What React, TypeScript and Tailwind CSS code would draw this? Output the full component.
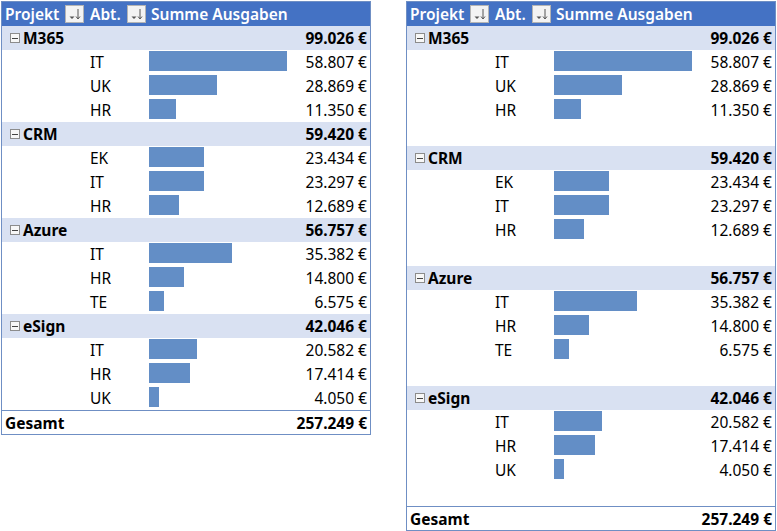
import React from "react";

type Item = { dept: string; value: number };
type Group = { name: string; total: string; items: Item[] };

const groups: Group[] = [
  { name: "M365", total: "99.026 €", items: [{ dept: "IT", value: 58807 }, { dept: "UK", value: 28869 }, { dept: "HR", value: 11350 }] },
  { name: "CRM", total: "59.420 €", items: [{ dept: "EK", value: 23434 }, { dept: "IT", value: 23297 }, { dept: "HR", value: 12689 }] },
  { name: "Azure", total: "56.757 €", items: [{ dept: "IT", value: 35382 }, { dept: "HR", value: 14800 }, { dept: "TE", value: 6575 }] },
  { name: "eSign", total: "42.046 €", items: [{ dept: "IT", value: 20582 }, { dept: "HR", value: 17414 }, { dept: "UK", value: 4050 }] },
];

const MAX = 58807;
const fmt = (v: number) => v.toLocaleString("de-DE") + " €";

function FilterButton() {
  return (
    <div className="w-[19px] h-[18px] bg-[#f3f3f3] border border-[#b4b4b4] flex items-center justify-center">
      <svg width="17" height="16" viewBox="0 0 17 16">
        <path d="M3.5 10.5 L8.5 10.5 L6 13 Z" fill="#555" />
        <path d="M12 3 L12 12.5" stroke="#555" strokeWidth="1" />
        <path d="M10 10.5 L12 13 L14 10.5" stroke="#555" strokeWidth="1" fill="none" />
      </svg>
    </div>
  );
}

function MinusBox() {
  return (
    <div className="w-[10px] h-[10px] border border-[#8c8c8c] bg-[#f7f7f7] flex items-center justify-center mr-[3px]">
      <div className="w-[6px] h-px bg-[#444]" />
    </div>
  );
}

function Pivot({ spaced }: { spaced: boolean }) {
  return (
    <div className="w-[370px] border border-[#6f8fc4] flex flex-col bg-white">
      <div className="h-6 bg-[#4472C4] grid grid-cols-[86px_60px_1fr] text-white font-semibold">
        <div className="flex items-center pl-[3px]">
          <span>Projekt</span>
          <div className="ml-auto mr-[4px]"><FilterButton /></div>
        </div>
        <div className="flex items-center pl-[2px]">
          <span>Abt.</span>
          <div className="ml-auto mr-[2px]"><FilterButton /></div>
        </div>
        <div className="flex items-center pl-[3px]">Summe Ausgaben</div>
      </div>
      {groups.map((g, gi) => (
        <React.Fragment key={g.name}>
          {spaced && gi > 0 && <div className="h-6" />}
          <div className="h-6 bg-[#D9E1F2] flex items-center font-bold">
            <div className="flex items-center pl-[8px]">
              <MinusBox />
              <span>{g.name}</span>
            </div>
            <div className="ml-auto pr-[3px]">{g.total}</div>
          </div>
          {g.items.map((it, i) => (
            <div key={i} className="h-6 grid grid-cols-[86px_60px_1fr]">
              <div />
              <div className="flex items-center pl-[2px]">{it.dept}</div>
              <div className="flex items-center">
                <div
                  className="self-start mt-px ml-px h-5 bg-[#638EC6]"
                  style={{ width: Math.round((it.value / MAX) * 138) }}
                />
                <div className="ml-auto pr-[3px]">{fmt(it.value)}</div>
              </div>
            </div>
          ))}
        </React.Fragment>
      ))}
      {spaced && <div className="h-6" />}
      <div className="h-6 border-t border-[#6f8fc4] flex items-center font-bold">
        <div className="pl-[3px]">Gesamt</div>
        <div className="ml-auto pr-[3px]">257.249 €</div>
      </div>
    </div>
  );
}

export default function App() {
  return (
    <div className="w-[777px] h-[531px] bg-white flex items-start gap-[35px] pl-px pt-px text-[15.5px] leading-6 text-black font-['Noto_Sans',sans-serif]">
      <Pivot spaced={false} />
      <Pivot spaced />
    </div>
  );
}
